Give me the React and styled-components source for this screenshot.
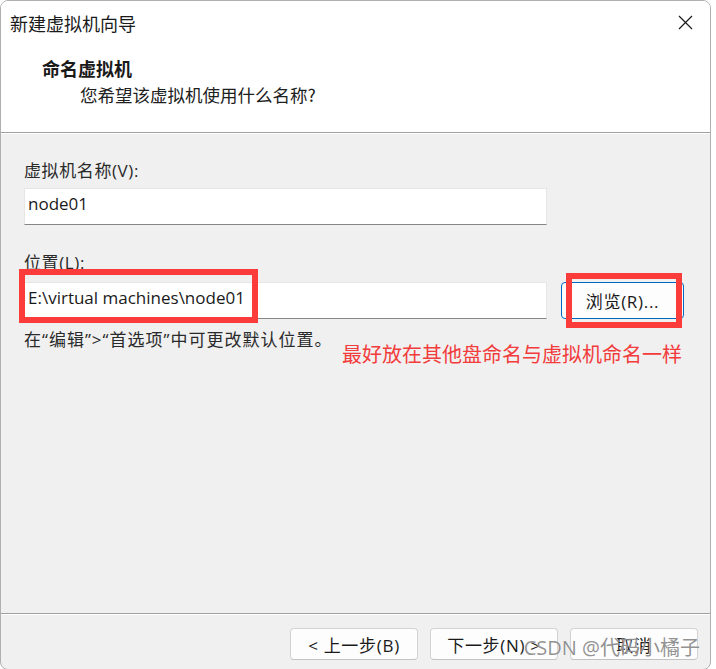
import styled, { createGlobalStyle } from "styled-components";

const GlobalStyle = createGlobalStyle`
  html, body {
    margin: 0;
    background: #ffffff;
  }
  body {
    font-family: "Open Sans", "Noto Sans CJK SC", sans-serif;
    color: #1a1a1a;
  }
`;

// Fenêtre de l'assistant
const SWindow = styled.div`
  position: relative;
  box-sizing: border-box;
  width: 711px;
  height: 670px;
  border: 1px solid #b0b0b0;
  border-radius: 8px;
  overflow: hidden;
  background: #f0f0f0;
  display: flex;
  flex-direction: column;
`;

const SHeader = styled.header`
  height: 131px;
  background: #ffffff;
  border-bottom: 1px solid #a0a0a0;
  box-shadow: 0 1px 0 #ffffff;
  flex-shrink: 0;
`;

const STitleBar = styled.div`
  height: 43px;
  display: flex;
  align-items: center;
  justify-content: space-between;
  padding: 0 17px 0 9px;
  font-family: "Noto Sans CJK SC", sans-serif;
  font-size: 18px;
  line-height: 1;
`;

const SHeading = styled.div`
  padding-left: 41px;
  margin-top: 12px;
  font-family: "Noto Sans CJK SC", sans-serif;

  h1 {
    margin: 0;
    font-size: 18px;
    font-weight: 700;
    line-height: 24px;
  }

  p {
    margin: 3px 0 0 38px;
    font-size: 17.5px;
    line-height: 24px;
    color: #202020;
  }
`;

const SContent = styled.main`
  flex: 1;
  padding: 26px 23px 0;
  margin-top: 1px;
`;

const SLabel = styled.label`
  display: block;
  font-size: 17px;
  line-height: 22px;
  letter-spacing: 0.6px;
  color: #2a2a2a;
  margin-top: ${(p) => p.$gap || 0}px;
`;

const SField = styled.div`
  position: relative;
  box-sizing: border-box;
  width: 523px;
  height: 37px;
  padding: 0 3px 6px;
  margin-top: 6px;
  display: flex;
  align-items: center;
  background: #ffffff;
  border: 1px solid #e6e6e6;
  border-bottom-color: #868686;
  font-family: "Open Sans", sans-serif;
  font-size: 17px;
`;

const SRow = styled.div`
  display: flex;
  align-items: flex-start;
  gap: 14px;
  margin-top: 8px;

  ${SField} {
    margin-top: 0;
  }
`;

const SButton = styled.button`
  position: relative;
  box-sizing: border-box;
  width: ${(p) => p.$width || 128}px;
  height: ${(p) => p.$height || 32}px;
  background: #fdfdfd;
  border: 1px solid ${(p) => (p.$primary ? "#0067c0" : "#d3d3d3")};
  border-bottom-color: ${(p) => (p.$primary ? "#0067c0" : "#c2c2c2")};
  border-radius: 4px;
  font-family: "Open Sans", "Noto Sans CJK SC", sans-serif;
  font-size: 17px;
  letter-spacing: 0.7px;
  color: #1a1a1a;
  padding: 0;
  display: flex;
  align-items: center;
  justify-content: center;
`;

// Cadre rouge d'annotation posé sur la capture
const SMark = styled.span`
  position: absolute;
  box-sizing: border-box;
  border: 6px solid #fc3b3b;
  pointer-events: none;
`;

const SHintRow = styled.div`
  display: flex;
  align-items: flex-start;
  margin-top: 9px;
`;

const SHint = styled.p`
  margin: 0;
  font-size: 17px;
  line-height: 24px;
  letter-spacing: 1px;
  color: #2a2a2a;
`;

const SNote = styled.p`
  margin: 13px 5px 0 auto;
  font-family: "Noto Sans CJK SC", sans-serif;
  font-size: 20px;
  line-height: 26px;
  color: #f23b3b;
`;

const SFooter = styled.footer`
  height: 56px;
  flex-shrink: 0;
  border-top: 1px solid #a0a0a0;
  box-shadow: inset 0 1px 0 #ffffff;
  display: flex;
  justify-content: flex-end;
  align-items: flex-start;
  gap: 12px;
  padding: 14px 12px 0 0;
  box-sizing: border-box;
`;

const SWatermark = styled.div`
  position: absolute;
  right: 10px;
  bottom: 8px;
  font-family: "Open Sans", "Noto Sans CJK SC", sans-serif;
  font-size: 20px;
  line-height: 26px;
  color: rgba(110, 110, 110, 0.75);
  text-shadow: 0 0 1px #fff;
  pointer-events: none;
`;

function CloseIcon() {
  return (
    <svg width="15" height="15" viewBox="0 0 15 15">
      <path d="M1 1L14 14M14 1L1 14" stroke="#1a1a1a" strokeWidth="1.2" fill="none" />
    </svg>
  );
}

export default function App() {
  return (
    <>
      <GlobalStyle />
      <SWindow>
        <SHeader>
          <STitleBar>
            <span>新建虚拟机向导</span>
            <CloseIcon />
          </STitleBar>
          <SHeading>
            <h1>命名虚拟机</h1>
            <p>您希望该虚拟机使用什么名称?</p>
          </SHeading>
        </SHeader>

        <SContent>
          <SLabel>虚拟机名称(V):</SLabel>
          <SField>node01</SField>

          <SLabel $gap={27}>位置(L):</SLabel>
          <SRow>
            <SField>
              E:\virtual machines\node01
              <SMark style={{ left: -6, top: -14, width: 239, height: 54 }} />
            </SField>
            <SButton $primary $width={123} $height={37}>
              浏览(R)...
              <SMark style={{ left: 4, top: -10, width: 116, height: 55 }} />
            </SButton>
          </SRow>

          <SHintRow>
            <SHint>在“编辑”&gt;“首选项”中可更改默认位置。</SHint>
            <SNote>最好放在其他盘命名与虚拟机命名一样</SNote>
          </SHintRow>
        </SContent>

        <SFooter>
          <SButton>&lt; 上一步(B)</SButton>
          <SButton>下一步(N) &gt;</SButton>
          <SButton>取消</SButton>
        </SFooter>

        <SWatermark>CSDN @代码小橘子</SWatermark>
      </SWindow>
    </>
  );
}
